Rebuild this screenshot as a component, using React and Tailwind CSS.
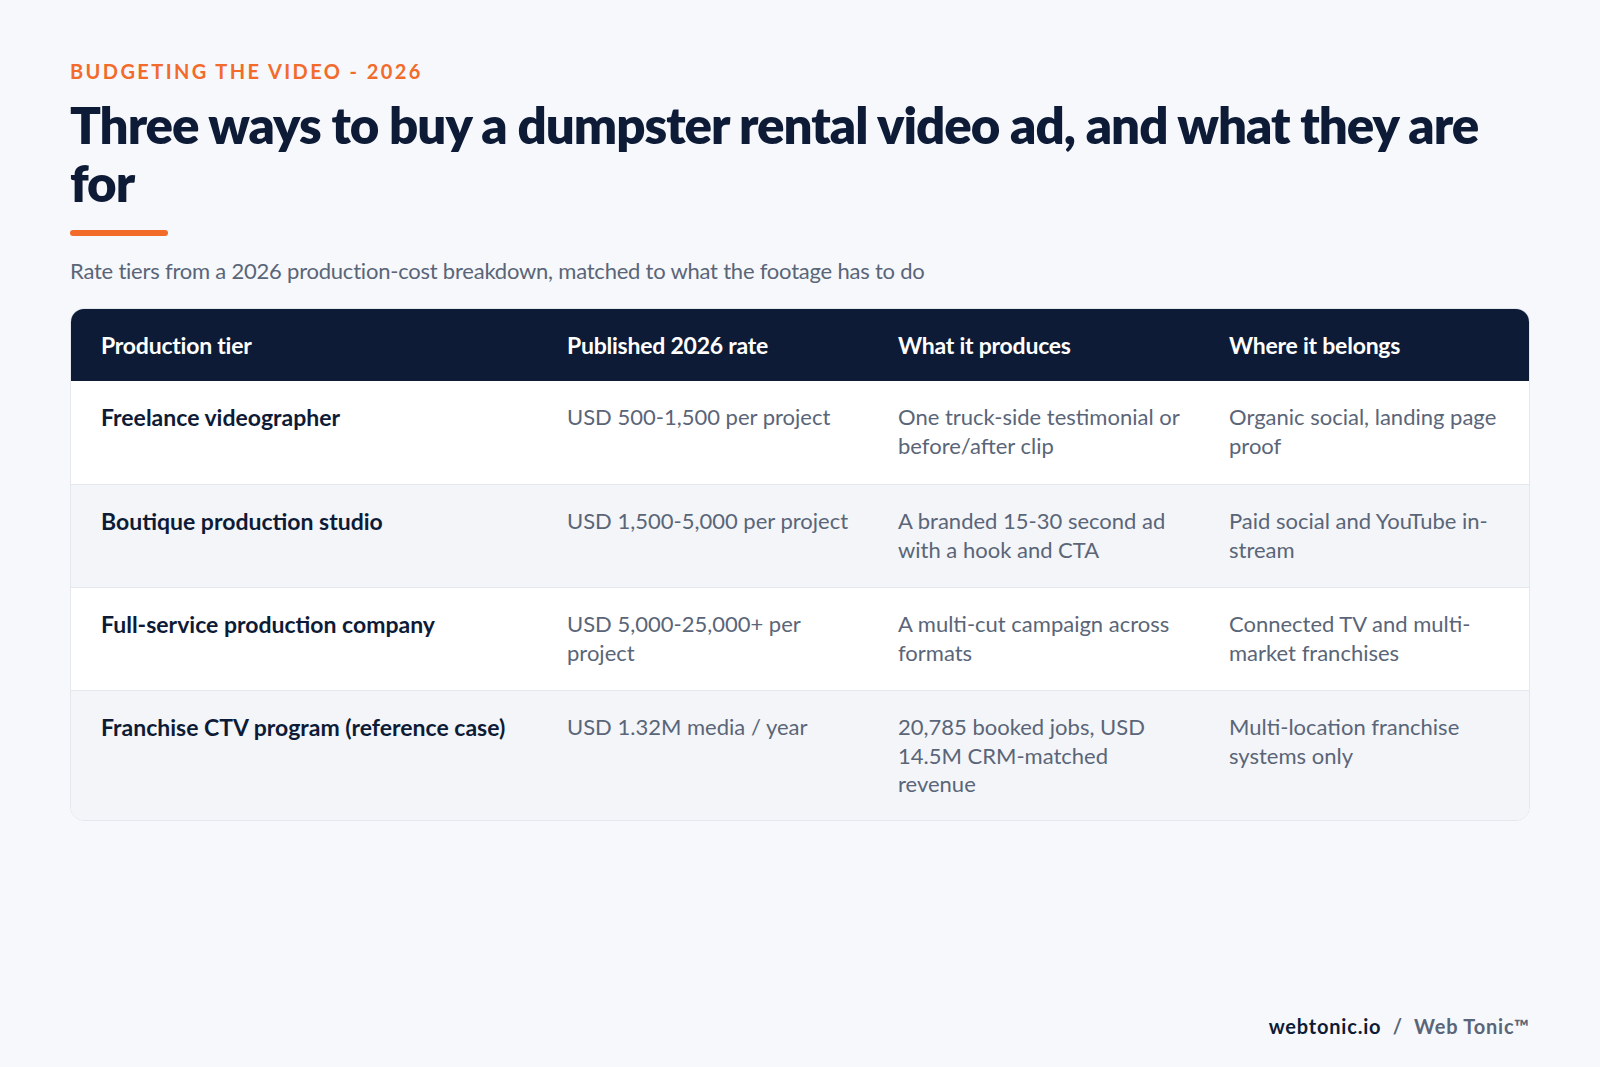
export default function App() {
  const rows = [
    ["Freelance videographer", "USD 500-1,500 per project", "One truck-side testimonial or before/after clip", "Organic social, landing page proof"],
    ["Boutique production studio", "USD 1,500-5,000 per project", "A branded 15-30 second ad with a hook and CTA", "Paid social and YouTube in-stream"],
    ["Full-service production company", "USD 5,000-25,000+ per project", "A multi-cut campaign across formats", "Connected TV and multi-market franchises"],
    ["Franchise CTV program (reference case)", "USD 1.32M media / year", "20,785 booked jobs, USD 14.5M CRM-matched revenue", "Multi-location franchise systems only"],
  ];
  const cols = "grid grid-cols-[496px_331px_331px_1fr]";
  return (
    <div className="min-h-[1067px] w-[1600px] bg-[#f6f8fb] px-[70px] pt-[58px] relative" style={{ fontFamily: "Lato, 'Noto Sans', sans-serif" }}>
      <div className="text-[20px] font-bold tracking-[0.12em] text-[#f26b2a] leading-[26px]">BUDGETING THE VIDEO - 2026</div>
      <h1 className="mt-[12px] max-w-[1420px] text-[51px] font-extrabold leading-[58px] tracking-[-0.02em] text-[#0e1b36]">Three ways to buy a dumpster rental video ad, and what they are for</h1>
      <div className="mt-[18px] h-[6px] w-[98px] rounded-full bg-[#f26b2a]"></div>
      <p className="mt-[20px] text-[22px] leading-[30px] tracking-[-0.01em] text-[#5a6578]">Rate tiers from a 2026 production-cost breakdown, matched to what the footage has to do</p>
      <div className="mt-[22px] w-[1460px] overflow-hidden rounded-[14px] border border-[#e3e7ee] bg-white">
        <div className={`${cols} h-[72px] items-center bg-[#0e1b36] text-white text-[23px] font-bold tracking-[-0.01em]`}>
          <div className="pl-[30px]">Production tier</div>
          <div>Published 2026 rate</div>
          <div>What it produces</div>
          <div>Where it belongs</div>
        </div>
        {rows.map((r, i) => (
          <div key={i} className={`${cols} ${i % 2 === 1 ? "bg-[#f3f5f9]" : "bg-white"} ${i > 0 ? "border-t border-[#e3e7ee]" : ""} ${i === 3 ? "min-h-[130px]" : "min-h-[103px]"} pt-[22px] pb-[20px] text-[22px] leading-[28.5px]`}>
            <div className="pl-[30px] font-bold text-[23px] text-[#0e1b36]">{r[0]}</div>
            <div className="pr-[40px] text-[#5a6578]">{r[1]}</div>
            <div className="pr-[40px] text-[#5a6578]">{r[2]}</div>
            <div className="pr-[24px] text-[#5a6578]">{r[3]}</div>
          </div>
        ))}
      </div>
      <div className="absolute right-[70px] top-[1011px] text-[20px] font-bold tracking-[0.04em] whitespace-pre">
        <span className="text-[#0e1b36]">webtonic.io</span>
        <span className="text-[#5a6578]">{"  /  "}</span>
        <span className="text-[#5a6578]">Web Tonic™</span>
      </div>
    </div>
  );
}
